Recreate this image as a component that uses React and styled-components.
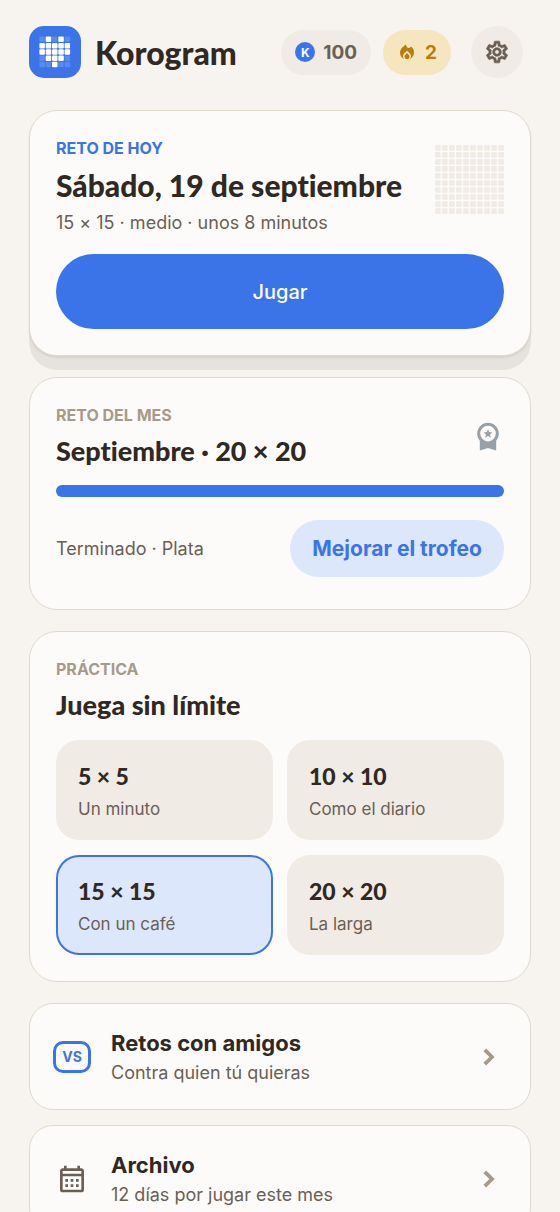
import styled, { createGlobalStyle } from 'styled-components'
import { MdOutlineSettings, MdOutlineCalendarMonth } from 'react-icons/md'

const GlobalStyle = createGlobalStyle`
* {
  box-sizing: border-box;
}
body {
  margin: 0;
  background-color: #f7f3ee;
  color: #2f2823;
  font-family: Inter, "Liberation Sans", sans-serif;
  font-variant-ligatures: none;
}
button {
  border: 0;
  font-family: inherit;
  cursor: pointer;
}
`

const Page = styled.div`
  display: flex;
  flex-direction: column;
  padding: 26px 29px 29px;
`

const Header = styled.header`
  display: flex;
  align-items: center;
  padding-right: 8px;
  margin-bottom: 32px;
`

const Brand = styled.h1`
  flex: 1;
  margin: 0;
  padding: 2px 0 0 14px;
  font-family: Lato, sans-serif;
  font-size: 32px;
  line-height: 40px;
  font-weight: 900;
`

const Pills = styled.div`
  display: flex;
  gap: 12px;
  margin-right: 20px;
`

const Pill = styled.div`
  display: flex;
  align-items: center;
  gap: 8px;
  height: 45px;
  padding: 0 14px;
  border-radius: 23px;
  background-color: ${(props) => props.$background};
  color: ${(props) => props.$color};
  font-size: 19px;
  font-weight: 700;
`

const Coin = styled.span`
  display: flex;
  align-items: center;
  justify-content: center;
  width: 20px;
  height: 20px;
  border-radius: 50%;
  background-color: #3b74e8;
  color: #fff;
  font-size: 12px;
  font-weight: 700;
`

const RoundButton = styled.button`
  display: flex;
  align-items: center;
  justify-content: center;
  width: 52px;
  height: 52px;
  padding: 0;
  border-radius: 50%;
  background-color: #f0ebe5;
  color: #6b5f54;
`

const SettingsIcon = styled(MdOutlineSettings)`
  path:last-child {
    stroke: currentColor;
    stroke-width: 0.6;
  }
`

const Card = styled.section`
  padding: 26px;
  border: 1px solid #e0d9ce;
  border-radius: 28px;
  background-color: #fdfbf9;
  margin-bottom: 21px;
`

const TodayCard = styled(Card)`
  box-shadow: 0 2px 2px #d6d1c9, 0 14px 0 #e6e3de;
`

const MonthCard = styled(Card)`
  padding-bottom: 32px;
`

const CardHead = styled.div`
  display: flex;
  align-items: ${(props) => props.$align || 'center'};
  justify-content: space-between;
`

const Overline = styled.p`
  margin: 0 0 6px;
  color: ${(props) => props.$color || '#a89a8a'};
  font-size: 16px;
  line-height: 22px;
  font-weight: 700;
  text-transform: uppercase;
`

const Title = styled.h2`
  margin: 0;
  font-family: Lato, sans-serif;
  font-size: ${(props) => (props.$large ? '30px' : '27px')};
  line-height: ${(props) => (props.$large ? '40px' : '38px')};
  font-weight: 900;
`

const Meta = styled.p`
  display: block;
  margin: 0;
  color: #6b5f54;
  font-size: 18px;
  line-height: 26px;
`

const TodayMeta = styled(Meta)`
  margin-top: 5px;
`

const Board = styled.svg`
  margin-top: 8px;
`

const PlayButton = styled.button`
  display: block;
  width: 100%;
  height: 75px;
  margin-top: 18px;
  border-radius: 38px;
  background-color: #3b74e8;
  color: #fff;
  font-size: 20px;
  font-weight: 500;
`

const Track = styled.div`
  height: 12px;
  margin: 15px 0 23px;
  border-radius: 6px;
  background-color: #f0ebe5;
`

const Fill = styled.div`
  height: 100%;
  border-radius: 6px;
  background-color: #3b74e8;
`

const SoftButton = styled.button`
  height: 57px;
  padding: 0 22px;
  border-radius: 29px;
  background-color: #dce7fc;
  color: #3b74e8;
  font-size: 21px;
  font-weight: 700;
`

const Sizes = styled.div`
  display: grid;
  grid-template-columns: 1fr 1fr;
  gap: 15px 14px;
  margin-top: 16px;
`

const SizeButton = styled.button`
  padding: 18px 20px 16px;
  border: 2px solid ${(props) => (props.$active ? '#3b74e8' : '#f0ebe5')};
  border-radius: 23px;
  background-color: ${(props) => (props.$active ? '#dce7fc' : '#f0ebe5')};
  color: inherit;
  text-align: left;
`

const SizeName = styled.span`
  display: block;
  margin-bottom: 4px;
  font-family: Lato, sans-serif;
  font-size: 23px;
  line-height: 32px;
  font-weight: 900;
`

const SizeNote = styled.span`
  display: block;
  color: #6b5f54;
  font-size: 17px;
  line-height: 26px;
`

const RowLink = styled.a`
  display: flex;
  align-items: center;
  height: 107px;
  margin-bottom: 15px;
  padding: 0 23px;
  border: 1px solid #e0d9ce;
  border-radius: 24px;
  background-color: #fdfbf9;
  color: inherit;
  text-decoration: none;
`

const RowIcon = styled.span`
  display: flex;
  justify-content: center;
  width: 38px;
  margin-right: 20px;
  color: #6b5f54;
`

const RowText = styled.span`
  flex: 1;
  padding-bottom: 2px;
`

const RowTitle = styled.span`
  display: block;
  font-size: 22px;
  line-height: 34px;
  font-weight: 700;
`

const Versus = styled.span`
  display: flex;
  align-items: center;
  justify-content: center;
  width: 38px;
  height: 32px;
  border: 3px solid #3b74e8;
  border-radius: 10px;
  color: #3b74e8;
  font-size: 14px;
  font-weight: 700;
`

const HEART = ['01010', '11111', '11111', '01110', '00100']

const sizes = [
  { name: '5 × 5', note: 'Un minuto' },
  { name: '10 × 10', note: 'Como el diario' },
  { name: '15 × 15', note: 'Con un café', active: true },
  { name: '20 × 20', note: 'La larga' },
]

function Logo() {
  return (
    <svg width="52" height="52" viewBox="0 0 52 52" aria-hidden="true">
      <rect width="52" height="52" rx="15" fill="#3b74e8" />
      {HEART.map((line, y) =>
        line.split('').map((cell, x) => (
          <rect
            key={x + '-' + y}
            x={10.4 + x * 6.3}
            y={10.6 + y * 6.3}
            width="5.5"
            height="5.5"
            rx="1"
            fill="#fff"
            opacity={cell === '1' ? 1 : 0.16}
          />
        ))
      )}
    </svg>
  )
}

function EmptyBoard() {
  const cells = []
  for (let i = 0; i < 100; i++) {
    cells.push(
      <rect key={i} x={(i % 10) * 7.07} y={Math.floor(i / 10) * 7.07} width="5.7" height="5.7" rx="1" />
    )
  }
  return (
    <Board width="69" height="69" viewBox="0 0 69.4 69.4" fill="#f0ebe5" aria-hidden="true">
      {cells}
    </Board>
  )
}

function Flame() {
  return (
    <svg width="20" height="20" viewBox="-3 -2.5 20 20" fill="currentColor" aria-hidden="true">
      <path d="M6 0C6 2 7.2 3.4 8.8 3.4C9.8 3.4 10.5 2.8 11 2.1C13 3.5 14 5.7 14 8C14 10.8 12.5 13.3 10.2 14.4C10.7 13.5 11 12.6 11 11.7C11 10.4 10.4 9.3 9.5 8.5L7 6.2L4.5 8.5C3.6 9.3 3 10.4 3 11.7C3 12.6 3.3 13.5 3.8 14.4C1.5 13.3 0 10.8 0 8C0 4.7 3 2 6 0Z" />
      <path d="M7 8.6L8.7 10.2C9.2 10.7 9.5 11.2 9.5 12.2A2.5 2.5 0 0 1 4.5 12.2C4.5 11.2 4.8 10.7 5.3 10.2Z" />
    </svg>
  )
}

function Medal() {
  return (
    <svg width="32" height="32" viewBox="0 0 32 32" aria-label="Plata" role="img">
      <path d="M7.8 17h16.4v11.6q0 .9-1 .6L16 27l-7.2 2.2q-1 .3-1-.6z" fill="#98a0a8" />
      <circle cx="16" cy="12.6" r="9.3" fill="#fdfbf9" stroke="#98a0a8" strokeWidth="3" />
      <path
        d="M16 8.2l1.25 2.9 3.15.3-2.4 2.05.75 3.1L16 14.9l-2.75 1.65.75-3.1-2.4-2.05 3.15-.3z"
        fill="#98a0a8"
      />
    </svg>
  )
}

function Chevron() {
  return (
    <svg width="36" height="36" viewBox="0 0 36 36" fill="none" aria-hidden="true">
      <path d="M13.8 10.8L21 18L13.8 25.2" stroke="#a89a8a" strokeWidth="3.8" />
    </svg>
  )
}

function App() {
  return (
    <Page>
      <GlobalStyle />
      <Header>
        <Logo />
        <Brand>Korogram</Brand>
        <Pills>
          <Pill $background="#f0ebe5" $color="#6b5f54">
            <Coin>K</Coin>
            100
          </Pill>
          <Pill $background="#f6e6bf" $color="#b97d0c">
            <Flame />
            2
          </Pill>
        </Pills>
        <RoundButton aria-label="Ajustes">
          <SettingsIcon size={26} />
        </RoundButton>
      </Header>

      <TodayCard>
        <CardHead $align="flex-start">
          <div>
            <Overline $color="#3b74e8">Reto de hoy</Overline>
            <Title $large>Sábado, 19 de septiembre</Title>
            <TodayMeta>15 × 15 · medio · unos 8 minutos</TodayMeta>
          </div>
          <EmptyBoard />
        </CardHead>
        <PlayButton>Jugar</PlayButton>
      </TodayCard>

      <MonthCard>
        <CardHead>
          <div>
            <Overline>Reto del mes</Overline>
            <Title>Septiembre · 20 × 20</Title>
          </div>
          <Medal />
        </CardHead>
        <Track>
          <Fill style={{ width: '100%' }} />
        </Track>
        <CardHead>
          <Meta>Terminado · Plata</Meta>
          <SoftButton>Mejorar el trofeo</SoftButton>
        </CardHead>
      </MonthCard>

      <Card>
        <Overline>Práctica</Overline>
        <Title>Juega sin límite</Title>
        <Sizes>
          {sizes.map((size) => (
            <SizeButton key={size.name} $active={size.active} aria-pressed={!!size.active}>
              <SizeName>{size.name}</SizeName>
              <SizeNote>{size.note}</SizeNote>
            </SizeButton>
          ))}
        </Sizes>
      </Card>

      <RowLink href="#amigos">
        <RowIcon>
          <Versus>VS</Versus>
        </RowIcon>
        <RowText>
          <RowTitle>Retos con amigos</RowTitle>
          <Meta as="span">Contra quien tú quieras</Meta>
        </RowText>
        <Chevron />
      </RowLink>
      <RowLink href="#archivo">
        <RowIcon>
          <MdOutlineCalendarMonth size={32} />
        </RowIcon>
        <RowText>
          <RowTitle>Archivo</RowTitle>
          <Meta as="span">12 días por jugar este mes</Meta>
        </RowText>
        <Chevron />
      </RowLink>
    </Page>
  )
}

export default App
